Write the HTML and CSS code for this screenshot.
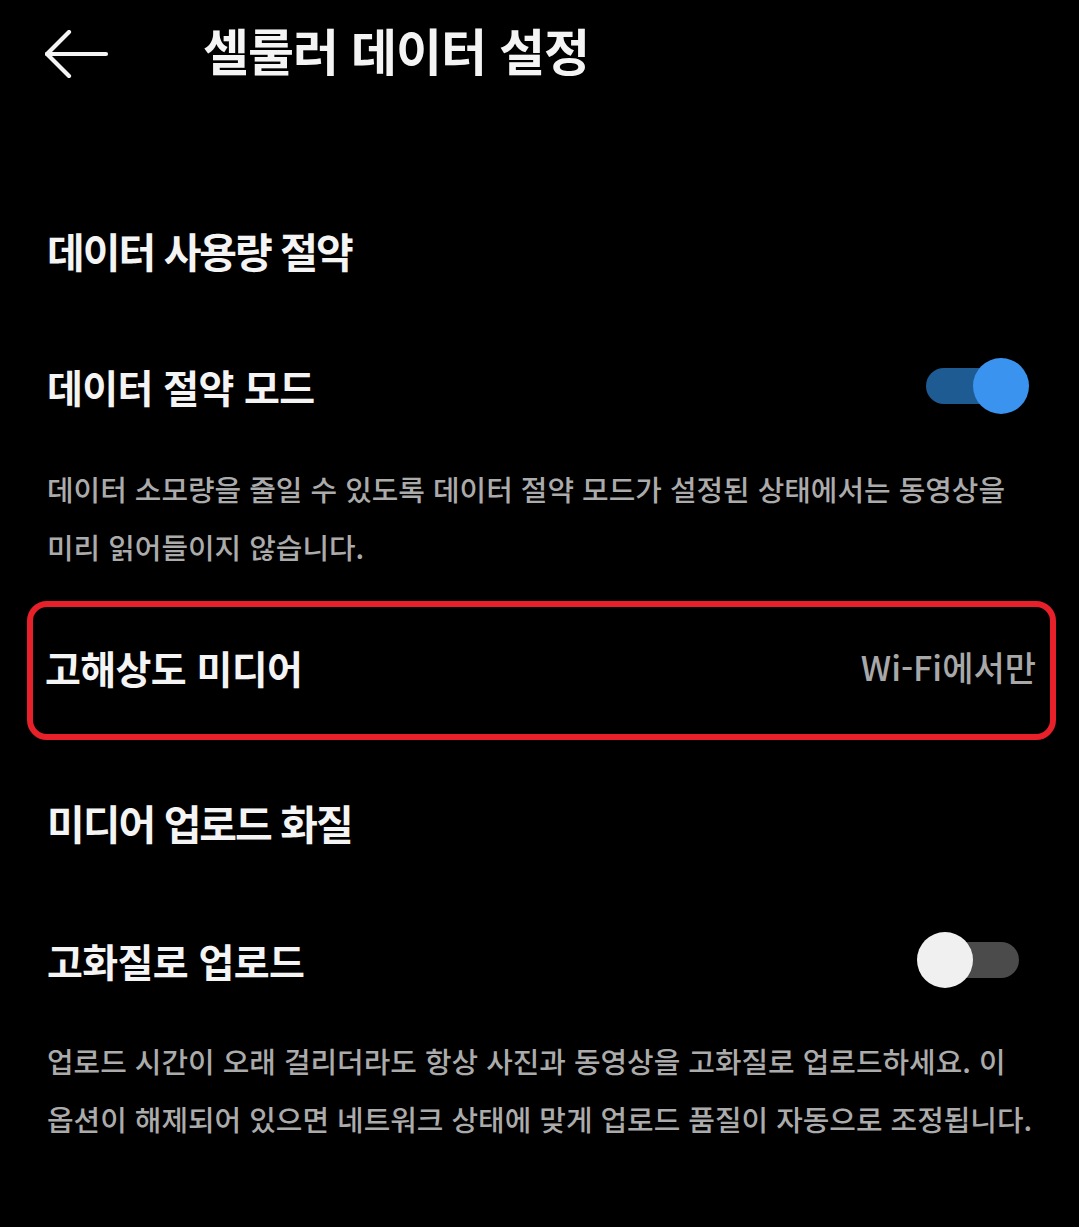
FILE: index.html
```html
<!DOCTYPE html>
<html lang="ko">
<head>
<meta charset="utf-8">
<title>셀룰러 데이터 설정</title>
<link rel="stylesheet" href="styles.css">
</head>
<body>
<div class="screen">
  <header class="topbar">
    <button class="back" aria-label="뒤로">
      <svg width="64" height="48" viewBox="0 0 64 48" fill="none" stroke="#f4f4f4" stroke-width="4.2" stroke-linecap="round" stroke-linejoin="round">
        <path d="M2 24H61"/>
        <path d="M24 2L2 24L24 46"/>
      </svg>
    </button>
    <h1 class="title">셀룰러 데이터 설정</h1>
  </header>

  <section class="group">
    <h2 class="group-title">데이터 사용량 절약</h2>
    <div class="row">
      <span class="row-label">데이터 절약 모드</span>
      <span class="switch on"><span class="track"></span><span class="knob"></span></span>
    </div>
    <p class="desc">데이터 소모량을 줄일 수 있도록 데이터 절약 모드가 설정된 상태에서는 동영상을 미리 읽어들이지 않습니다.</p>
    <div class="row row-link highlighted">
      <span class="row-label">고해상도 미디어</span>
      <span class="row-value">Wi-Fi에서만</span>
    </div>
  </section>

  <section class="group group-2">
    <h2 class="group-title">미디어 업로드 화질</h2>
    <div class="row">
      <span class="row-label">고화질로 업로드</span>
      <span class="switch off"><span class="track"></span><span class="knob"></span></span>
    </div>
    <p class="desc">업로드 시간이 오래 걸리더라도 항상 사진과 동영상을 고화질로 업로드하세요. 이 옵션이 해제되어 있으면 네트워크 상태에 맞게 업로드 품질이 자동으로 조정됩니다.</p>
  </section>
</div>
</body>
</html>
```

FILE: styles.css
```css
html, body {
  margin: 0;
  padding: 0;
  background: #000;
}

body {
  font-family: "Noto Sans CJK KR", "Noto Sans", sans-serif;
  color: #f4f4f4;
  width: 1079px;
  height: 1227px;
  overflow: hidden;
}

.screen {
  display: flex;
  flex-direction: column;
}

/* top app bar */
.topbar {
  height: 104px;
  display: flex;
  align-items: center;
  padding-left: 45px;
}

.back {
  background: none;
  border: 0;
  padding: 0;
  width: 64px;
  height: 48px;
  display: flex;
  margin-top: 4px;
}

.title {
  margin: -6px 0 0 94px;
  font-size: 50px;
  font-weight: 700;
  letter-spacing: -1px;
  line-height: 1;
}

/* groups */
.group {
  display: flex;
  flex-direction: column;
  margin-top: 108px;
}

.group-2 {
  margin-top: 44px;
}

.group-title {
  margin: 0;
  height: 82px;
  box-sizing: border-box;
  padding: 0 0 6px 47px;
  display: flex;
  align-items: center;
  font-size: 41px;
  font-weight: 700;
  letter-spacing: -2px;
}

.row {
  height: 82px;
  box-sizing: border-box;
  display: flex;
  align-items: center;
  justify-content: space-between;
  padding: 0 50px 4px 47px;
  margin-top: 53px;
}

.group-2 .row {
  margin-top: 55px;
}

.row-label {
  font-size: 39px;
  font-weight: 700;
  letter-spacing: -0.6px;
}

.row-value {
  font-size: 34px;
  font-weight: 500;
  color: #a8a8a8;
}

.desc {
  margin: 30px 0 0;
  padding: 0 28px 0 47px;
  font-size: 28.9px;
  font-weight: 500;
  line-height: 58px;
  color: #ababab;
  word-break: keep-all;
}

.group-2 .desc {
  margin-top: 28px;
}

/* highlighted link row */
.highlighted {
  margin: 26px 23px 0 27px;
  height: 139px;
  border: 6px solid #e8202a;
  border-radius: 20px;
  padding: 0 14px 8px 12px;
}

/* switches */
.switch {
  position: relative;
  width: 112px;
  height: 56px;
  flex: none;
}

.switch .track {
  position: absolute;
  left: 9px;
  right: 10px;
  top: 10px;
  height: 36px;
  border-radius: 18px;
}

.switch .knob {
  position: absolute;
  top: 0;
  width: 56px;
  height: 56px;
  border-radius: 50%;
}

.switch.on .track { background: #1f5b93; }
.switch.on .knob { right: 0; background: #3a93ee; }

.switch.off .track { background: #4b4b4b; }
.switch.off .knob { left: 0; background: #f0f0f0; }
```
